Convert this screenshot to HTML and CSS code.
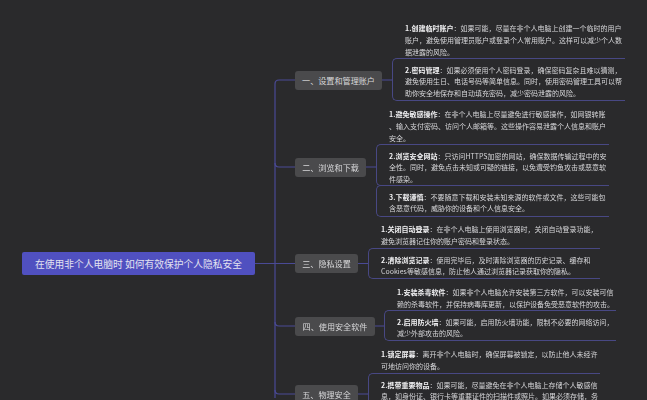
FILE: index.html
```html
<!DOCTYPE html>
<html lang="zh-CN">
<head>
<meta charset="utf-8">
<title>在使用非个人电脑时 如何有效保护个人隐私安全</title>
<link rel="stylesheet" href="styles.css">
</head>
<body>
<main class="map">
<svg class="links" width="647" height="400" viewBox="0 0 647 400" aria-hidden="true">
  <path d="M295 80H279Q275 80 275 84V398"/>
  <path d="M255 263.5H295M275 163Q275 167 279 167H295M275 322Q275 326 279 326H295M275 390Q275 394 279 394H295"/>
  <path d="M381 80H392M366 167H376M358 263.500H368M375 326H384M358 394H368"/>
</svg>

<div class="node root">在使用非个人电脑时 如何有效保护个人隐私安全</div>

<div class="node branch b1">一、设置和管理账户</div>
<div class="node branch b2">二、浏览和下载</div>
<div class="node branch b3">三、隐私设置</div>
<div class="node branch b4">四、使用安全软件</div>
<div class="node branch b5">五、物理安全</div>

<p class="node leaf l11"><b>1.创建临时账户</b>：如果可能，尽量在非个人电脑上创建一个临时的用户<br>账户，避免使用管理员账户或登录个人常用账户。这样可以减少个人数<br>据泄露的风险。</p>
<p class="node leaf framed l12"><b>2.密码管理</b>：如果必须使用个人密码登录，确保密码复杂且难以猜测，<br>避免使用生日、电话号码等简单信息。同时，使用密码管理工具可以帮<br>助你安全地保存和自动填充密码，减少密码泄露的风险。</p>

<p class="node leaf l21"><b>1.避免敏感操作</b>：在非个人电脑上尽量避免进行敏感操作，如网银转账<br>、输入支付密码、访问个人邮箱等。这些操作容易泄露个人信息和账户<br>安全。</p>
<p class="node leaf framed l22"><b>2.浏览安全网站</b>：只访问HTTPS加密的网站，确保数据传输过程中的安<br>全性。同时，避免点击未知或可疑的链接，以免遭受钓鱼攻击或恶意软<br>件感染。</p>
<p class="node leaf framed l23"><b>3.下载谨慎</b>：不要随意下载和安装未知来源的软件或文件，这些可能包<br>含恶意代码，威胁你的设备和个人信息安全。</p>

<p class="node leaf l31"><b>1.关闭自动登录</b>：在非个人电脑上使用浏览器时，关闭自动登录功能，<br>避免浏览器记住你的账户密码和登录状态。</p>
<p class="node leaf framed l32"><b>2.清除浏览记录</b>：使用完毕后，及时清除浏览器的历史记录、缓存和<br>Cookies等敏感信息，防止他人通过浏览器记录获取你的隐私。</p>

<p class="node leaf l41"><b>1.安装杀毒软件</b>：如果非个人电脑允许安装第三方软件，可以安装可信<br>赖的杀毒软件，并保持病毒库更新，以保护设备免受恶意软件的攻击。</p>
<p class="node leaf framed l42"><b>2.启用防火墙</b>：如果可能，启用防火墙功能，限制不必要的网络访问，<br>减少外部攻击的风险。</p>

<p class="node leaf l51"><b>1.锁定屏幕</b>：离开非个人电脑时，确保屏幕被锁定，以防止他人未经许<br>可地访问你的设备。</p>
<p class="node leaf framed l52"><b>2.携带重要物品</b>：如果可能，尽量避免在非个人电脑上存储个人敏感信<br>息，如身份证、银行卡等重要证件的扫描件或照片。如果必须存储，务</p>
</main>
</body>
</html>
```
FILE: styles.css
```css
* { box-sizing: border-box; }
html, body { margin: 0; height: 100%; background: #2a2a2c; overflow: hidden; }
.map {
  position: relative;
  width: 647px;
  height: 400px;
  overflow: hidden;
  font-family: "Noto Sans CJK SC", "Noto Sans", sans-serif;
  filter: blur(0.4px);
}
.links { position: absolute; left: 0; top: 0; fill: none; stroke: #4a4a96; stroke-width: 1.2; }
.node { position: absolute; margin: 0; white-space: nowrap; }
.root {
  left: 22px; top: 252px; width: 233px; height: 23px;
  display: flex; align-items: center; justify-content: center;
  background: #5050c0; border-radius: 2px;
  color: #e2e2f0; font-size: 9.75px;
}
.branch {
  left: 295px; height: 19px;
  display: flex; align-items: center; justify-content: center;
  background: #4a4a4c; border-radius: 3px;
  color: #d8d8da; font-size: 8.1px;
}
.b1 { top: 71px; width: 87px; }
.b2 { top: 158px; width: 71px; }
.b3 { top: 254px; width: 63px; }
.b4 { top: 317px; width: 80px; }
.b5 { top: 385px; width: 63px; }
.leaf { color: #d6d6d9; font-size: 7px; line-height: 11.8px; }
.leaf b { color: #f0f0f2; font-weight: 700; }
.framed {
  border: 1.5px solid #484884; border-right: 0; border-radius: 5px 0 0 5px;
  padding: 5.5px 0 5px 12px;
}
.l11 { left: 405px; top: 23px; }
.l12 { left: 392px; top: 58px; width: 233px; height: 43px; }
.l21 { left: 389px; top: 109px; }
.l22 { left: 376px; top: 144px; width: 233px; height: 42px; }
.l23 { left: 376px; top: 185px; width: 233px; height: 32px; }
.l31 { left: 381px; top: 224px; }
.l32 { left: 368px; top: 248px; width: 232px; height: 31px; }
.l41 { left: 397px; top: 287px; }
.l42 { left: 384px; top: 310px; width: 232px; height: 31px; }
.l51 { left: 381px; top: 349px; }
.l52 { left: 368px; top: 373px; width: 232px; height: 40px; line-height: 11px; }
```
